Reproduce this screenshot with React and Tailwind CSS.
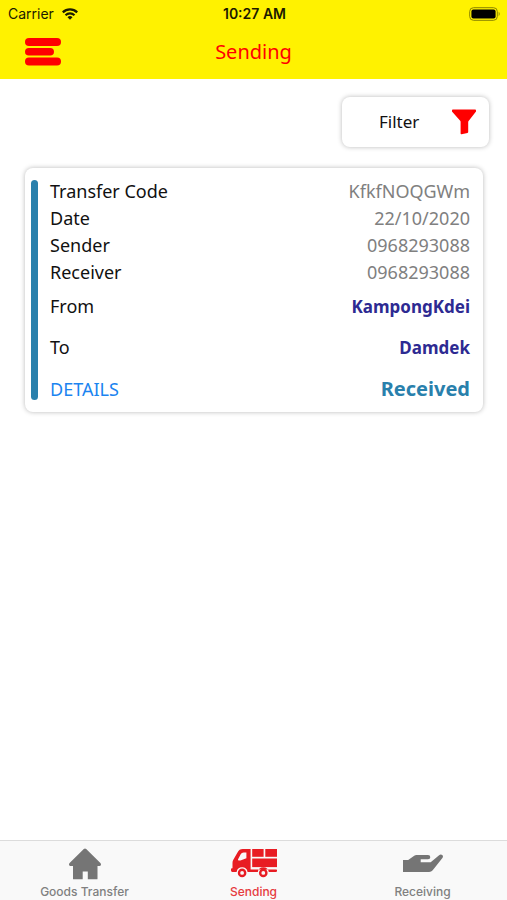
const rows = [
  { label: "Transfer Code", value: "KfkfNOQGWm" },
  { label: "Date", value: "22/10/2020" },
  { label: "Sender", value: "0968293088" },
  { label: "Receiver", value: "0968293088" },
];

const places = [
  { label: "From", value: "KampongKdei" },
  { label: "To", value: "Damdek" },
];

function WifiIcon() {
  return (
    <svg className="h-3 w-4" viewBox="0 0 16 12" fill="none" stroke="#1c1a00" aria-hidden="true">
      <path d="M.8 4.3a10.4 10.4 0 0 1 14.4 0" strokeWidth="2.3" />
      <path d="M3.5 7.2a6.500 6.500 0 0 1 9 0" strokeWidth="2.1" />
      <path d="M8 11.8 5.500 9.300a3.600 3.600 0 0 1 5 0z" fill="#1c1a00" stroke="none" />
    </svg>
  );
}

function BatteryIcon() {
  return (
    <svg className="h-[14px] w-8" viewBox="0 0 32 14" aria-hidden="true">
      <rect x=".7" y=".7" width="27.6" height="12.6" rx="3.8" fill="none" stroke="#8a8300" strokeWidth="1" />
      <rect x="2.4" y="2.4" width="24.2" height="9.2" rx="2" fill="#000" />
      <path d="M29.7 4.8q2 2.2 0 4.4z" fill="#8a8300" />
    </svg>
  );
}

function MenuIcon() {
  return (
    <svg className="h-7 w-9" viewBox="0 0 36 28" fill="#ff0000" aria-hidden="true">
      <rect y="0" width="36" height="8" rx="4" />
      <rect y="10" width="29" height="7.6" rx="3.8" />
      <rect y="19.6" width="36" height="8" rx="4" />
    </svg>
  );
}

function FilterIcon() {
  return (
    <svg className="h-[26px] w-6" viewBox="0 0 24 26" fill="#ff0000" aria-hidden="true">
      <path d="M.8.6h22.4q.8 0 .8.8v.8q0 .5-.4.9l-7 8.800q-.4.500-.4 1.200v9.800q0 .700-.7 1l-5.900 1.300q-1 .2-1-.8V13q0-.7-.4-1.200L.4 3.100Q0 2.700 0 2.200v-.8Q0 .6.8.6z" />
    </svg>
  );
}

function HomeIcon() {
  return (
    <svg className="h-8 w-8" viewBox="0 0 32 32" fill="#757575" aria-hidden="true">
      <path d="M14.800 1q1.200-.9 2.400 0L31.400 15q.9 1 .4 2.200-.3.800-1.300.8H28.500v12.700q0 .5-.5.500H18.800v-7.600h-5.100v7.600H4.500q-.5 0-.5-.5V18H1.500q-1 0-1.300-.8Q-.3 16 .6 15z" />
    </svg>
  );
}

function TruckIcon() {
  return (
    <svg className="h-8 w-[46px]" viewBox="0 0 46 32" fill="#e81c23" aria-hidden="true">
      <path
        fillRule="evenodd"
        d="M19.600 1v20.400h25.700q.7 0 .7.700v1q0 .8-.8.800h-7.400a5.600 5.600 0 0 0-11 0H16.600a5.600 5.600 0 0 0-11 0H1.300Q0 23.900 0 22.600v-1.500q0-.8 1-.8h.5v-5.500q0-1.400.7-2.700L6.500 4.400Q8.200 1 11.800 1zM15.400 4.400h-2.800q-2 0-2.900 1.900l-2.600 5q-.5 1.100.7 1.100h1.600l6-2.200z"
      />
      <rect x="21.200" y="1" width="11.400" height="7.800" />
      <rect x="34.300" y="1" width="11.700" height="7.800" />
      <rect x="21.200" y="10.500" width="24.800" height="8.600" />
      <path
        fillRule="evenodd"
        d="M11.100 20.600a4.300 4.300 0 1 1 0 8.600 4.300 4.300 0 0 1 0-8.600zm0 2.400a1.900 1.900 0 1 0 0 3.800 1.900 1.900 0 0 0 0-3.800zM32.300 20.600a4.300 4.300 0 1 1 0 8.600 4.300 4.300 0 0 1 0-8.600zm0 2.400a1.900 1.900 0 1 0 0 3.800 1.900 1.900 0 0 0 0-3.800z"
      />
    </svg>
  );
}

function HandIcon() {
  return (
    <svg className="h-8 w-10" viewBox="0 0 40 32" fill="#757575" aria-hidden="true">
      <path d="M0 12h5.200l6-4.300q1-.7 2.200-.7H25q2.300 0 2.300 2.200 0 2.100-2.300 2.100h-7.300v2.900h9.200q.8 0 1.400-.5l7.800-6.500q1.700-1.300 3.200-.1 1.300 1.300.1 3L29.700 22.300Q28.200 24 26.200 24H0z" />
    </svg>
  );
}

const tabs = [
  { label: "Goods Transfer", Icon: HomeIcon, color: "text-[#808080]" },
  { label: "Sending", Icon: TruckIcon, color: "text-[#e63b40]", current: true },
  { label: "Receiving", Icon: HandIcon, color: "text-[#808080]" },
];

export default function App() {
  return (
    <div className="flex min-h-screen flex-col bg-white font-['Noto_Sans',sans-serif] text-[17px] text-[#111]">
      <header className="bg-[#fff200] pb-[10px]">
        <div className="grid h-[27px] grid-cols-3 items-center pr-[6px] pl-2 font-['Inter',sans-serif] text-sm text-[#1c1a00]">
          <div className="flex items-center gap-2">
            Carrier <WifiIcon />
          </div>
          <time className="text-center font-semibold">10:27 AM</time>
          <div className="flex justify-end">
            <BatteryIcon />
          </div>
        </div>
        <div className="grid grid-cols-[36px_1fr_36px] items-center px-[25px] pt-2">
          <button type="button" aria-label="Menu" className="py-[3px]">
            <MenuIcon />
          </button>
          <h1 className="text-center text-xl leading-7 text-[#ff0000]">Sending</h1>
        </div>
      </header>

      <main className="flex-1 pt-[18px]">
        <div className="flex justify-end pr-[18px]">
          <button
            type="button"
            className="flex h-[50px] w-[147px] items-center justify-between rounded-lg bg-white pr-[13px] pl-[37px] shadow-[0_0_5px_rgba(0,0,0,0.28)]"
          >
            Filter
            <FilterIcon />
          </button>
        </div>

        <article className="mt-[21px] mr-6 ml-[25px] flex gap-3 rounded-lg bg-white pr-[13px] pl-[6px] shadow-[0_0_5px_rgba(0,0,0,0.28)]">
          <div className="my-3 w-[7px] shrink-0 rounded-full bg-[#2980ac]" />
          <div className="flex-1 pt-[10px] pb-[3px] text-lg">
            <dl>
              {rows.map((row) => (
                <div key={row.label} className="flex items-baseline justify-between leading-[27px]">
                  <dt>{row.label}</dt>
                  <dd className="text-[#808080]">{row.value}</dd>
                </div>
              ))}
              {places.map((row) => (
                <div key={row.label} className="flex h-[41px] items-baseline justify-between leading-[41px]">
                  <dt>{row.label}</dt>
                  <dd className="text-[17px] font-bold text-[#2d2a92]">{row.value}</dd>
                </div>
              ))}
            </dl>
            <div className="flex h-[41px] items-baseline justify-between leading-[41px]">
              <a href="#details" className="text-[#1b84f0]">
                DETAILS
              </a>
              <strong className="text-[20px] font-bold text-[#2980ac]">Received</strong>
            </div>
          </div>
        </article>
      </main>

      <nav className="grid h-[60px] grid-cols-3 border-t border-[#dcdcdc] bg-[#f9f9f9] font-['Inter',sans-serif] text-xs font-medium">
        {tabs.map(({ label, Icon, color, current }) => (
          <a
            key={label}
            href="#tab"
            aria-current={current ? "page" : undefined}
            className={`flex flex-col items-center gap-1 pt-[7px] ${color}`}
          >
            <Icon />
            <span>{label}</span>
          </a>
        ))}
      </nav>
    </div>
  );
}
